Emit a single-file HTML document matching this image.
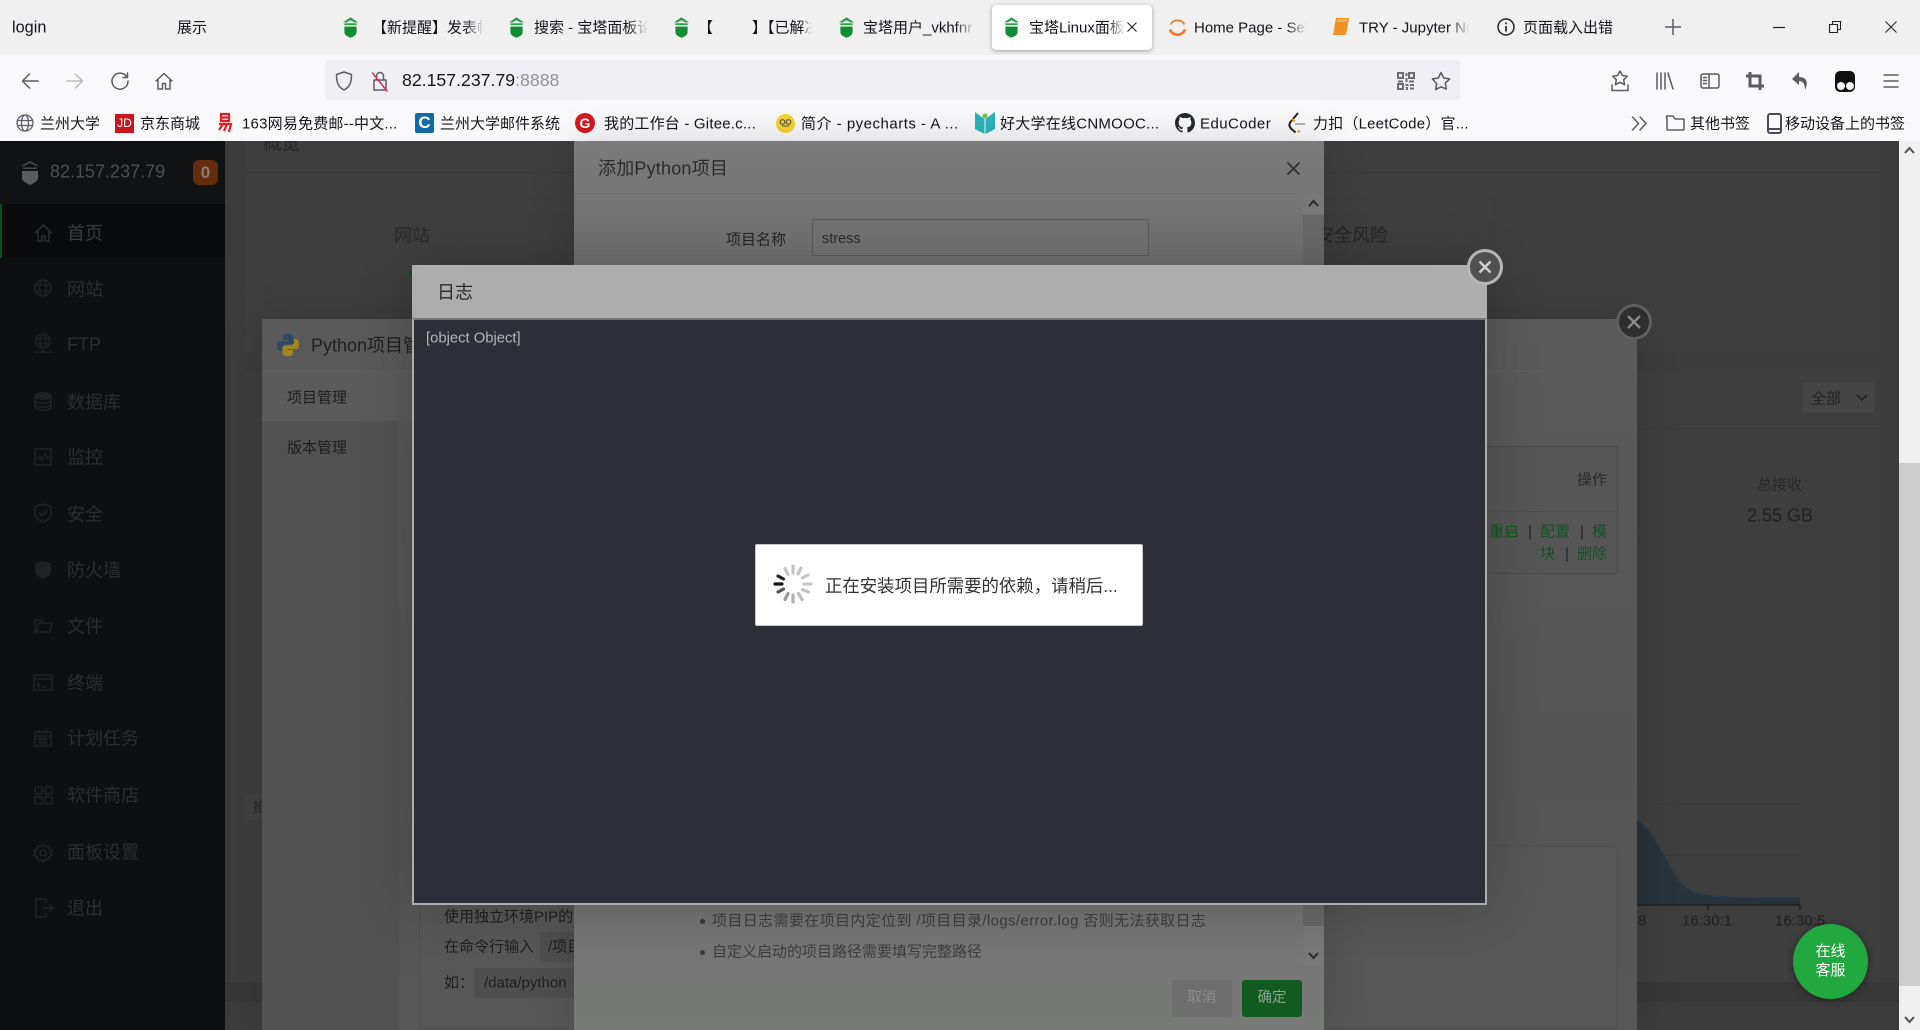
<!DOCTYPE html>
<html lang="zh-CN"><head><meta charset="utf-8"><title>宝塔Linux面板</title>
<style>
*{box-sizing:border-box}
html,body{margin:0;padding:0;width:1920px;height:1030px;overflow:hidden;background:#3c3c3c}
body{position:relative;font-family:"Liberation Sans","Noto Sans CJK SC",sans-serif;color:#111}
.a{position:absolute}
.t{position:absolute;white-space:nowrap;line-height:1.2;transform:translateY(calc(-50% + 1.5px))}
.f{overflow:hidden;-webkit-mask-image:linear-gradient(to right,#000 82%,transparent);mask-image:linear-gradient(to right,#000 82%,transparent)}
.tab{font-size:15px;color:#15141a}
.bm{font-size:15px;color:#15141a}
.nav{font-size:18px;color:#2d2d2d;left:67px}
svg{position:absolute;overflow:visible}
.ic{fill:none;stroke:#5b5b66;stroke-width:1.5;stroke-linecap:round;stroke-linejoin:round}
.si{fill:none;stroke:#202124;stroke-width:1.6}
</style></head><body>
<svg width="0" height="0" style="position:absolute"><defs>
<symbol id="bt" viewBox="0 0 16 22"><path d="M8 0 0 5.500H4L8 3.200 12 5.500H16z" fill="#2f9e4f"/><path d="M1.500 6.500h13v2h-13z" fill="#2f9e4f"/><path d="M1.500 10h13v6c0 2.800-3 4.600-6.500 5.800C4.500 20.600 1.500 18.800 1.500 16z" fill="#108c33"/></symbol>
</defs></svg>

<!-- tab strip -->
<div class="a" style="left:0;top:0;width:1920px;height:55px;background:#f0f0f0"></div>
<div class="t tab" style="left:12px;top:27px;font-size:16.300px">login</div>
<div class="t tab" style="left:177px;top:27px">展示</div>
<svg style="left:343px;top:17px" width="15" height="21"><use href="#bt" width="15" height="21"/></svg>
<div class="t tab f" style="left:372px;top:27px;width:112px">【新提醒】发表帖子</div>
<svg style="left:509px;top:17px" width="15" height="21"><use href="#bt" width="15" height="21"/></svg>
<div class="t tab f" style="left:534px;top:27px;width:114px">搜索 - 宝塔面板论坛</div>
<svg style="left:674px;top:17px" width="15" height="21"><use href="#bt" width="15" height="21"/></svg>
<div class="t tab" style="left:698px;top:27px">【</div>
<div class="t tab f" style="left:752px;top:27px;width:60px">】【已解决</div>
<svg style="left:839px;top:17px" width="15" height="21"><use href="#bt" width="15" height="21"/></svg>
<div class="t tab f" style="left:863px;top:27px;width:112px">宝塔用户_vkhfnr</div>
<div class="a" style="left:992px;top:5px;width:160px;height:45px;background:#fff;border-radius:4px;box-shadow:0 1px 4px rgba(0,0,0,.35)"></div>
<svg style="left:1004px;top:17px" width="15" height="21"><use href="#bt" width="15" height="21"/></svg>
<div class="t tab f" style="left:1029px;top:27px;width:96px">宝塔Linux面板</div>
<svg style="left:1127px;top:22px" width="10" height="10"><path d="M.5.5l9 9M9.500.5l-9 9" stroke="#222" stroke-width="1.100"/></svg>
<svg style="left:1168px;top:17px" width="20" height="20"><path d="M2.500 7.500A8 8 0 0 1 16.500 7.500" fill="none" stroke="#f37626" stroke-width="1.700"/><path d="M2 12.500A8 8 0 0 0 17 12.500" fill="none" stroke="#f37626" stroke-width="2.600"/></svg>
<div class="t tab f" style="left:1194px;top:27px;width:113px">Home Page - Select</div>
<svg style="left:1332px;top:17px" width="18" height="20"><path d="M4 1h13l-3 17H1z" fill="#f29223"/><path d="M5 2h10l-.5 3H4.500z" fill="#f8b35c"/></svg>
<div class="t tab f" style="left:1359px;top:27px;width:111px">TRY - Jupyter Notebook</div>
<svg style="left:1497px;top:18px" width="18" height="18"><circle cx="9" cy="9" r="8" fill="none" stroke="#222" stroke-width="1.500"/><path d="M9 8v5.500M9 4.500v1.800" stroke="#222" stroke-width="1.700"/></svg>
<div class="t tab" style="left:1523px;top:27px">页面载入出错</div>
<svg style="left:1665px;top:19px" width="16" height="16"><path d="M8 0v16M0 8h16" stroke="#5b5b66" stroke-width="1.500"/></svg>
<svg style="left:1773px;top:27px" width="12" height="2"><path d="M0 .5h12" stroke="#222" stroke-width="1.200"/></svg>
<svg style="left:1829px;top:21px" width="12" height="12"><path d="M.5 3.500h8v8h-8zM3.500 3.500V.5h8v8h-3" fill="none" stroke="#222" stroke-width="1.100"/></svg>
<svg style="left:1885px;top:21px" width="12" height="12"><path d="M.5.500l11 11M11.500.5l-11 11" stroke="#222" stroke-width="1.100"/></svg>

<!-- toolbar -->
<div class="a" style="left:0;top:55px;width:1920px;height:86px;background:#f9f9fb"></div>
<svg class="ic" style="left:21px;top:72px" width="18" height="18"><path d="M17 9H1.500M8.500 2 1.500 9l7 7"/></svg>
<svg class="ic" style="left:66px;top:72px;stroke:#bcbcc2" width="18" height="18"><path d="M1 9h15.500M9.500 2l7 7-7 7"/></svg>
<svg class="ic" style="left:111px;top:72px" width="18" height="18"><path d="M15.500 4.500A8 8 0 1 0 17 9M16.500 1v4.500H12"/></svg>
<svg class="ic" style="left:155px;top:72px" width="18" height="18"><path d="M1 9 9 1.500 17 9M3 7.500V17h4.500v-5.500h3V17H15V7.500"/></svg>
<div class="a" style="left:325px;top:60px;width:1135px;height:40px;background:#f0f0f4;border-radius:4px"></div>
<svg class="ic" style="left:335px;top:71px" width="18" height="20"><path d="M9 1 1.500 3.500C1.500 11 3 16 9 19c6-3 7.500-8 7.500-15.500z"/></svg>
<svg class="ic" style="left:371px;top:70px" width="18" height="22"><path d="M5.500 10V6a3.500 3.500 0 0 1 7 0v4M3 10h12v10H3z"/><path d="M1.500 3 16 21" stroke="#e22850"/></svg>
<div class="t" style="left:402px;top:79px;font-size:17.700px;color:#15141a">82.157.237.79<span style="color:#8f8f9d">:8888</span></div>
<svg style="left:1397px;top:72px" width="18" height="18"><path d="M0 0h7v7H0zM11 0h7v7h-7zM0 11h7v7H0z" fill="#6c6c76"/><path d="M2 2h3v3H2zM13 2h3v3h-3zM2 13h3v3H2z" fill="#f0f0f4"/><path d="M8.500 1h2v3h-2zM8.500 6h2v4h-2zM1 8.500h5v2H1zM12 8.500h5v2h-5zM8.500 12h3v2h-3zM13 12h4v2h-4zM9 15h2v3H9zM13 15.500h4v2h-4z" fill="#6c6c76"/></svg>
<svg class="ic" style="left:1431px;top:71px" width="20" height="20"><path d="M10 1.500l2.700 5.500 6 .9-4.400 4.200 1 6L10 15.800l-5.300 2.800 1-6L1.300 7.900l6-.9z"/></svg>
<svg class="ic" style="left:1610px;top:70px" width="20" height="22"><path d="M10 1l2.300 4.500 5 .7-3.600 3.500.9 5-4.600-2.400-4.600 2.400.9-5L2.700 6.200l5-.7zM2 15v5.500h16V15"/></svg>
<svg class="ic" style="left:1656px;top:72px" width="18" height="18"><path d="M1 1v16M5 1v16M9 1v16M12 1l5 16"/></svg>
<svg class="ic" style="left:1700px;top:73px" width="20" height="16"><rect x="1" y="1" width="18" height="14" rx="2"/><path d="M9 1v14M3.500 4.500h3M3.500 7.500h3M3.500 10.500h3"/></svg>
<svg style="left:1746px;top:72px" width="18" height="18"><path d="M4 0v14h14M0 4h14v14" fill="none" stroke="#5b5b66" stroke-width="3"/></svg>
<svg style="left:1792px;top:72px" width="16" height="19"><path d="M7 0 0 7l7 6V9c4 0 6 3 6 9 3-6 3-13-6-13z" fill="#5b5b66"/></svg>
<div class="a" style="left:1835px;top:71px;width:20px;height:21px;background:#111;border-radius:5px"></div>
<div class="a" style="left:1837px;top:82px;width:8px;height:8px;background:#f4f4f4;border-radius:50%"></div>
<div class="a" style="left:1846px;top:82px;width:8px;height:8px;background:#f4f4f4;border-radius:50%"></div>
<svg class="ic" style="left:1884px;top:74px" width="14" height="14"><path d="M0 1h14M0 7h14M0 13h14"/></svg>

<!-- bookmarks -->
<svg style="left:16px;top:114px" width="18" height="18"><g fill="none" stroke="#5b5b66" stroke-width="1.300"><circle cx="9" cy="9" r="8"/><ellipse cx="9" cy="9" rx="3.500" ry="8"/><path d="M1 6.500h16M1 11.500h16"/></g></svg>
<div class="t bm" style="left:40px;top:123px">兰州大学</div>
<div class="a" style="left:115px;top:114px;width:19px;height:19px;background:#c9151e;color:#fff;font:12px/19px 'Liberation Sans';text-align:center">JD</div>
<div class="t bm" style="left:140px;top:123px">京东商城</div>
<svg style="left:217px;top:113px" width="16" height="21"><path d="M4 1h8v7H4zM4 4.500h8M2 11h12l-2 8M6 11l-4 6M10 11l-3 7" fill="none" stroke="#e51c23" stroke-width="2.200"/></svg>
<div class="t bm" style="left:242px;top:123px;letter-spacing:.2px">163网易免费邮--中文...</div>
<div class="a" style="left:415px;top:113px;width:19px;height:20px;background:#0f6aa5;border-radius:2px;color:#fff;font:bold 17px/20px 'Liberation Sans';text-align:center">C</div>
<div class="t bm" style="left:440px;top:123px">兰州大学邮件系统</div>
<div class="a" style="left:575px;top:113px;width:20px;height:20px;background:#d7171f;border-radius:50%;color:#fff;font:bold 14px/20px 'Liberation Sans';text-align:center">G</div>
<div class="t bm" style="left:604px;top:123px;letter-spacing:.2px">我的工作台 - Gitee.c...</div>
<div class="a" style="left:776px;top:114px;width:19px;height:19px;background:#f6d32d;border-radius:50%"></div>
<svg style="left:779px;top:119px" width="13" height="9"><circle cx="3.500" cy="3" r="2.300" fill="none" stroke="#555" stroke-width="1.200"/><circle cx="9.500" cy="3" r="2.300" fill="none" stroke="#555" stroke-width="1.200"/><path d="M3 7h7" stroke="#555"/></svg>
<div class="t bm" style="left:801px;top:123px;letter-spacing:.5px">简介 - pyecharts - A ...</div>
<svg style="left:975px;top:112px" width="20" height="22"><path d="M0 0l9.500 7v15L0 17zM20 0l-9.500 7v15l9.500-5z" fill="#2ab4bb"/><circle cx="10" cy="4" r="2.500" fill="#70c34a"/></svg>
<div class="t bm" style="left:1000px;top:123px;letter-spacing:.25px">好大学在线CNMOOC...</div>
<svg style="left:1175px;top:113px" width="20" height="20" viewBox="0 0 16 16"><path d="M8 0C3.580 0 0 3.580 0 8c0 3.540 2.290 6.530 5.470 7.590.4.070.55-.17.55-.38v-1.340c-2.230.48-2.700-1.070-2.700-1.070-.36-.93-.89-1.170-.89-1.170-.73-.5.050-.49.050-.49.800.060 1.230.830 1.230.830.710 1.220 1.870.870 2.330.660.070-.520.280-.870.500-1.070-1.780-.2-3.640-.890-3.640-3.950 0-.870.310-1.590.820-2.150-.080-.200-.360-1.020.080-2.120 0 0 .670-.210 2.200.820a7.600 7.600 0 0 1 4 0c1.530-1.040 2.200-.820 2.200-.820.440 1.100.160 1.920.080 2.120.510.560.820 1.270.820 2.150 0 3.070-1.870 3.750-3.650 3.950.290.250.540.730.540 1.480v2.200c0 .210.150.460.550.380A8 8 0 0 0 16 8c0-4.420-3.580-8-8-8z" fill="#24292e"/></svg>
<div class="t bm" style="left:1200px;top:123px;letter-spacing:.45px">EduCoder</div>
<svg style="left:1288px;top:112px" width="18" height="22"><path d="M10 1 2.500 10c-2 2.500-1 5 1 7l4 3.500" fill="none" stroke="#222" stroke-width="2"/><path d="M12 18.500l-2.500 2" stroke="#f89f1b" stroke-width="2"/><path d="M7 12h10" stroke="#b3b3b3" stroke-width="2"/><path d="M4 7l3 2.500" stroke="#f89f1b" stroke-width="2"/></svg>
<div class="t bm" style="left:1313px;top:123px;letter-spacing:.2px">力扣（LeetCode）官...</div>
<svg class="ic" style="left:1631px;top:116px" width="17" height="15"><path d="M1.500 1l6 6.500-6 6.500M9 1l6 6.500-6 6.500"/></svg>
<svg class="ic" style="left:1666px;top:115px" width="19" height="16"><path d="M1 3v11a1 1 0 0 0 1 1h15a1 1 0 0 0 1-1V4H9L7 1H2a1 1 0 0 0-1 2z"/></svg>
<div class="t bm" style="left:1690px;top:123px">其他书签</div>
<svg style="left:1767px;top:113px" width="15" height="21"><rect x="1" y="1" width="13" height="19" rx="2" fill="none" stroke="#4a4a55" stroke-width="2"/><path d="M1 16h13" stroke="#4a4a55" stroke-width="2"/></svg>
<div class="t bm" style="left:1785px;top:123px">移动设备上的书签</div>

<!-- sidebar -->
<div class="a" style="left:0;top:141px;width:225px;height:889px;background:#0e0f11"></div>
<div class="a" style="left:0;top:141px;width:225px;height:63px;background:#111214"></div>
<div class="a" style="left:0;top:204px;width:225px;height:54px;background:#0a0b0d;border-left:2px solid #0b4d1a"></div>
<svg style="left:20px;top:161px" width="20" height="24"><path d="M10 0 1 5h3l6-3 6 3h3z" fill="#4b4b4b"/><path d="M3 6.500h14v1.500H3z" fill="#4b4b4b"/><path d="M2 10h16v7c0 3-4 5-8 7-4-2-8-4-8-7z" fill="#5c5c5c"/></svg>
<div class="t" style="left:50px;top:171px;font-size:18px;color:#4c4e51">82.157.237.79</div>
<div class="a" style="left:193px;top:160px;width:25px;height:25px;border-radius:6px;background:#642b0c;color:#8a7e73;font:bold 17px/25px 'Liberation Sans';text-align:center">0</div>

<svg class="si" style="left:34px;top:223px;stroke:#2a2b2e" width="19" height="19"><path d="M1 10 9.500 2 18 10M4 8v10h4v-5h3v5h4V8"/></svg>
<div class="t nav" style="top:233px;color:#3b3b3b">首页</div>
<svg class="si" style="left:34px;top:279px" width="18" height="18"><circle cx="9" cy="9" r="8"/><ellipse cx="9" cy="9" rx="3.500" ry="8"/><path d="M1 6h16M1 12h16"/></svg>
<div class="t nav" style="top:289px">网站</div>
<svg class="si" style="left:33px;top:333px" width="20" height="21"><circle cx="10" cy="8" r="7"/><ellipse cx="10" cy="8" rx="3" ry="7"/><path d="M3 5.500h14M3 10.500h14M0 19h20M10 15v4"/></svg>
<div class="t nav" style="top:344px">FTP</div>
<svg class="si" style="left:34px;top:392px" width="18" height="19"><ellipse cx="9" cy="4" rx="8" ry="3.200" fill="#202124"/><path d="M1 4v11c0 2 3.500 3.200 8 3.200s8-1.200 8-3.200V4M1 8c0 2 3.500 3.200 8 3.200S17 10 17 8M1 12c0 2 3.500 3.200 8 3.200s8-1.200 8-3.200"/></svg>
<div class="t nav" style="top:402px">数据库</div>
<svg class="si" style="left:34px;top:448px" width="18" height="18"><path d="M1 1h16v16H1zM3 12l3-3 2 3 3-6 2 4 2-1"/></svg>
<div class="t nav" style="top:457px">监控</div>
<svg class="si" style="left:34px;top:503px" width="18" height="20"><path d="M9 1 1 3.500V11c0 4 4 6.500 8 8 4-1.500 8-4 8-8V3.500zM5 9.500l3 3 5-5"/></svg>
<div class="t nav" style="top:514px">安全</div>
<svg style="left:34px;top:560px" width="18" height="20"><path d="M9 1 1 3.500V11c0 4 4 6.500 8 8 4-1.500 8-4 8-8V3.500z" fill="#202124"/></svg>
<div class="t nav" style="top:570px">防火墙</div>
<svg class="si" style="left:34px;top:617px" width="19" height="16"><path d="M1 3v12h15l2-9H5L2 15M1 3h6l2 3h7"/></svg>
<div class="t nav" style="top:626px">文件</div>
<svg class="si" style="left:33px;top:674px" width="20" height="17"><path d="M1 1h18v15H1zM1 5h18M4 9l3 2-3 2M9 13h4"/></svg>
<div class="t nav" style="top:683px">终端</div>
<svg class="si" style="left:34px;top:729px" width="18" height="18"><path d="M1 3h16v14H1zM1 7h16M5 1v3M13 1v3M4 10h10M4 13.500h10M7.500 8v8M11 8v8"/></svg>
<div class="t nav" style="top:738px">计划任务</div>
<svg class="si" style="left:34px;top:786px" width="19" height="19"><rect x="1" y="1" width="7" height="7" rx="1.500"/><rect x="11" y="1" width="7" height="7" rx="1.500"/><rect x="1" y="11" width="7" height="7" rx="1.500"/><rect x="11" y="11" width="7" height="7" rx="1.500"/></svg>
<div class="t nav" style="top:795px">软件商店</div>
<svg class="si" style="left:34px;top:843px" width="18" height="19"><path d="M9 1l2 2.500 3-.5 1 3 3 1.500L16.500 10 18 12.500 15 14l-1 3-3-.5L9 19l-2-2.500-3 .5-1-3-3-1.500L1.500 10 0 7.500 3 6l1-3 3 .5z"/><circle cx="9" cy="10" r="3"/></svg>
<div class="t nav" style="top:852px">面板设置</div>
<svg class="si" style="left:35px;top:898px" width="18" height="20"><path d="M11 5V1H1v18h10v-4M7 10h11M14 6.500 18 10l-4 3.500"/></svg>
<div class="t nav" style="top:908px">退出</div>

<!-- main background content -->
<div class="a" style="left:225px;top:141px;width:1674px;height:889px;background:#3c3c3c"></div>
<div class="a" style="left:245px;top:141px;width:1635px;height:841px;background:#3e3e3e"></div>
<div class="a" style="left:245px;top:172px;width:1635px;height:1px;background:#393939"></div>
<div class="t" style="left:263px;top:142px;font-size:18.500px;color:#262626;clip-path:inset(8.600px 0 0 0)">概览</div>
<div class="a" style="left:270px;top:198px;width:285px;height:140px;border:1px solid #3b3b3b"></div>
<div class="t" style="left:394px;top:235px;font-size:18px;color:#2b2b2b">网站</div>
<div class="a" style="left:408px;top:272px;width:6px;height:2px;background:#0c4f1c;transform:rotate(-45deg)"></div>
<div class="a" style="left:1318px;top:198px;width:176px;height:140px;border:1px solid #3b3b3b"></div>
<div class="t" style="left:1316px;top:235px;font-size:18px;color:#262626">安全风险</div>
<div class="a" style="left:1637px;top:370px;width:243px;height:1px;background:#3a3a3a"></div>
<div class="a" style="left:225px;top:352px;width:1674px;height:20px;background:#3c3c3c"></div>
<div class="a" style="left:1802px;top:383px;width:72px;height:30px;background:#454545"></div>
<div class="t" style="left:1811px;top:398px;font-size:15px;color:#222">全部</div>
<svg style="left:1856px;top:394px" width="12" height="8"><path d="M1 1l5 5 5-5" fill="none" stroke="#1d1d1d" stroke-width="1.500"/></svg>
<div class="a" style="left:1637px;top:428px;width:243px;height:1px;background:#3a3a3a"></div>
<div class="t" style="left:1757px;top:484px;font-size:15px;color:#2a2a2a">总接收</div>
<div class="t" style="left:1747px;top:515px;font-size:18px;color:#222">2.55 GB</div>
<div class="a" style="left:245px;top:794px;width:60px;height:26px;background:#414141;color:#2a2a2a;font-size:14px;padding:3px 8px">推荐</div>
<div class="a" style="left:225px;top:982px;width:1674px;height:20px;background:#383838"></div>
<svg style="left:1637px;top:800px" width="170" height="110"><path d="M0 4h163M0 55h163" stroke="#383838" stroke-width="1"/><path d="M0 21C20 32 28 66 45 85 58 97 70 98 163 98V105H0z" fill="#293239"/><path d="M0 21C20 32 28 66 45 85 58 97 70 98 163 98" fill="none" stroke="#23394e" stroke-width="1.500"/><path d="M0 105h163M71 105v5M163 105v5" stroke="#202020" stroke-width="1.500"/></svg>
<div class="t" style="left:1638px;top:920px;font-size:15px;color:#202020">8</div>
<div class="t" style="left:1682px;top:920px;font-size:15px;color:#202020">16:30:1</div>
<div class="t" style="left:1775px;top:920px;font-size:15px;color:#202020">16:30:5</div>

<!-- python modal -->
<div class="a" style="left:262px;top:319px;width:1375px;height:711px;background:linear-gradient(#5a5a5a,#555 60%,#575757);box-shadow:0 0 40px rgba(0,0,0,.15)"></div>
<div class="a" style="left:262px;top:371px;width:1375px;height:1px;background:#606060"></div>
<svg style="left:276px;top:333px" width="24" height="24" viewBox="0 0 24 24"><path d="M12 1C7 1 7 3 7 5v2h5.500v1H4C1.500 8 1 11 1 13s1 5 3 5h2v-3c0-2 2-3.500 4-3.500h5c1.500 0 2.500-1 2.500-2.500V4c0-2-2.500-3-5.500-3z" fill="#2a4a68"/><path d="M12 23c5 0 5-2 5-4v-2h-5.500v-1H20c2.500 0 3-3 3-5s-1-5-3-5h-2v3c0 2-2 3.500-4 3.500H9C7.500 12.500 6.500 13.500 6.500 15v5c0 2 2.500 3 5.500 3z" fill="#a18520"/></svg>
<div class="t" style="left:311px;top:345px;font-size:18px;color:#1f1f1f">Python项目管理</div>
<div class="a" style="left:262px;top:372px;width:150px;height:49px;background:#5b5b5b"></div>
<div class="a" style="left:262px;top:421px;width:137px;height:609px;background:#525252"></div>
<div class="t" style="left:287px;top:397px;font-size:15px;color:#1d1d1d">项目管理</div>
<div class="t" style="left:287px;top:447px;font-size:15px;color:#1d1d1d">版本管理</div>
<div class="a" style="left:420px;top:446px;width:1198px;height:128px;border:1px solid #4b4b4b;background:#565656"></div>
<div class="a" style="left:421px;top:511px;width:1196px;height:1px;background:#4e4e4e"></div>
<div class="t" style="left:1577px;top:479px;font-size:15px;color:#2b2b2b">操作</div>
<div class="t" style="left:1489px;top:531px;font-size:15px;color:#125222">重启</div>
<div class="t" style="left:1528px;top:531px;font-size:15px;color:#222">|</div>
<div class="t" style="left:1540px;top:531px;font-size:15px;color:#125222">配置</div>
<div class="t" style="left:1580px;top:531px;font-size:15px;color:#222">|</div>
<div class="t" style="left:1592px;top:531px;font-size:15px;color:#125222">模</div>
<div class="t" style="left:1540px;top:553px;font-size:15px;color:#125222">块</div>
<div class="t" style="left:1565px;top:553px;font-size:15px;color:#222">|</div>
<div class="t" style="left:1577px;top:553px;font-size:15px;color:#125222">删除</div>
<div class="a" style="left:419px;top:846px;width:1199px;height:183px;border:1px solid #4e4e4e;border-radius:5px;background:#575757"></div>
<div class="t" style="left:444px;top:916px;font-size:15px;color:#1f1f1f">使用独立环境PIP的方法</div>
<div class="t" style="left:444px;top:946px;font-size:15px;color:#1f1f1f">在命令行输入</div>
<div class="a" style="left:540px;top:932px;width:60px;height:30px;background:#4f4f4f"></div>
<div class="t" style="left:548px;top:946px;font-size:15px;color:#1f1f1f">/项目</div>
<div class="t" style="left:444px;top:982px;font-size:15px;color:#1f1f1f">如：</div>
<div class="a" style="left:474px;top:968px;width:110px;height:30px;background:#4f4f4f"></div>
<div class="t" style="left:484px;top:982px;font-size:15px;color:#1f1f1f">/data/python</div>
<svg style="left:1616px;top:304px" width="36" height="36"><circle cx="18" cy="18" r="16.500" fill="#2e2e2e" stroke="#5f5f5f" stroke-width="3"/><path d="M12 12l12 12M24 12 12 24" stroke="#8a8a8a" stroke-width="2.400"/></svg>

<!-- add project modal -->
<div class="a" style="left:574px;top:141px;width:750px;height:889px;background:linear-gradient(#7b7b7b,#6e6e6e 14%,#707070 80%,#787a78);box-shadow:0 0 40px rgba(0,0,0,.15)"></div>
<div class="a" style="left:574px;top:193px;width:750px;height:1px;background:#707070"></div>
<div class="t" style="left:598px;top:168px;font-size:18px;letter-spacing:.2px;color:#2b2b2b">添加Python项目</div>
<svg style="left:1287px;top:162px" width="13" height="13"><path d="M.5.5l12 12M12.500.5l-12 12" stroke="#2f2f2f" stroke-width="1.800"/></svg>
<div class="a" style="left:1303px;top:193px;width:21px;height:773px;background:#787878"></div>
<div class="a" style="left:1303px;top:215px;width:21px;height:711px;background:#686868"></div>
<svg style="left:1308px;top:199px" width="11" height="8"><path d="M1 7l4.500-5L10 7" fill="none" stroke="#2b2b2b" stroke-width="2"/></svg>
<svg style="left:1308px;top:952px" width="11" height="8"><path d="M1 1l4.500 5L10 1" fill="none" stroke="#2b2b2b" stroke-width="2"/></svg>
<div class="t" style="left:726px;top:239px;font-size:15px;color:#232323">项目名称</div>
<div class="a" style="left:812px;top:219px;width:337px;height:37px;border:1px solid #5a5a5a;border-radius:2px;background:#727272"></div>
<div class="t" style="left:822px;top:238px;font-size:14.500px;color:#2b2b2b">stress</div>
<div class="a" style="left:700px;top:919px;width:5px;height:5px;border-radius:50%;background:#3a3a3a"></div>
<div class="t" style="left:712px;top:920px;font-size:15px;letter-spacing:.37px;color:#3d3d3d">项目日志需要在项目内定位到 /项目目录/logs/error.log 否则无法获取日志</div>
<div class="a" style="left:700px;top:950px;width:5px;height:5px;border-radius:50%;background:#3a3a3a"></div>
<div class="t" style="left:712px;top:951px;font-size:15px;color:#3d3d3d">自定义启动的项目路径需要填写完整路径</div>
<div class="a" style="left:574px;top:966px;width:750px;height:1px;background:#727472"></div>
<div class="a" style="left:1172px;top:980px;width:60px;height:37px;background:#6e6e6e;border-radius:3px;color:#8d8d8d;font:14.500px/37px 'Liberation Sans','Noto Sans CJK SC',sans-serif;text-align:center">取消</div>
<div class="a" style="left:1242px;top:980px;width:60px;height:37px;background:#115a20;border-radius:3px;color:#8aa590;font:14.500px/37px 'Liberation Sans','Noto Sans CJK SC',sans-serif;text-align:center">确定</div>

<!-- log modal -->
<div class="a" style="left:412px;top:265px;width:1075px;height:640px;box-shadow:0 0 50px rgba(0,0,0,.2)"></div>
<div class="a" style="left:412px;top:265px;width:1075px;height:54px;background:#adadad"></div>
<div class="t" style="left:437px;top:292px;font-size:18px;color:#2a2a2a">日志</div>
<div class="a" style="left:412px;top:318px;width:1075px;height:587px;background:#2e2e38;border:2px solid #adadad;border-top-color:#777"></div>
<div class="t" style="left:426px;top:337.500px;font-size:14.800px;color:#b5b5b5">[object Object]</div>
<svg style="left:1467px;top:249px" width="36" height="36"><circle cx="18" cy="18" r="16.500" fill="#505050" stroke="#b5b5b5" stroke-width="3"/><path d="M12.500 12.500l11 11M23.500 12.500l-11 11" stroke="#d0d0d0" stroke-width="2.400"/></svg>

<!-- loading box -->
<div class="a" style="left:755px;top:544px;width:388px;height:82px;background:#fff;border:1px solid #c9c9cc;border-radius:2px"></div>
<svg style="left:773px;top:564px" width="40" height="40" viewBox="-20 -20 40 40"><g stroke-width="3.200" stroke-linecap="round"><path d="M0-18 0-11" stroke="#c4c4c4"/><path d="M8-16 5-10" stroke="#c4c4c4"/><path d="M15-9 9.500-6" stroke="#c6c6c6"/><path d="M18 0H11" stroke="#c6c6c6"/><path d="M15.500 8 9.500 5.500" stroke="#c2c2c2"/><path d="M9 15.500 5.500 9.500" stroke="#bdbdbd"/><path d="M0 18v-7" stroke="#b2b2b2"/><path d="M-8 15.500-5 9.500" stroke="#9a9a9a"/><path d="M-15 8-9.500 5" stroke="#555"/><path d="M-18 0H-11" stroke="#111"/><path d="M-15-8-9.500-5" stroke="#222"/><path d="M-8-15.500-5-9.500" stroke="#c4c4c4"/></g></svg>
<div class="t" style="left:825px;top:585px;font-size:17.400px;color:#333">正在安装项目所需要的依赖，请稍后...</div>

<!-- online service -->
<div class="a" style="left:1793px;top:924px;width:75px;height:75px;border-radius:50%;background:#21a83e;box-shadow:0 1px 8px rgba(0,0,0,.4);color:#fff;font-size:15px;line-height:19px;text-align:center;padding-top:18px">在线<br>客服</div>

<!-- page scrollbar -->
<div class="a" style="left:1899px;top:141px;width:21px;height:889px;background:#f0f0f0"></div>
<div class="a" style="left:1899px;top:463px;width:21px;height:523px;background:#cdcdcd"></div>
<svg style="left:1904px;top:146px" width="11" height="8"><path d="M1 7l4.500-5L10 7" fill="none" stroke="#505050" stroke-width="2"/></svg>
<svg style="left:1904px;top:1016px" width="11" height="8"><path d="M1 1l4.500 5L10 1" fill="none" stroke="#505050" stroke-width="2"/></svg>
</body></html>
